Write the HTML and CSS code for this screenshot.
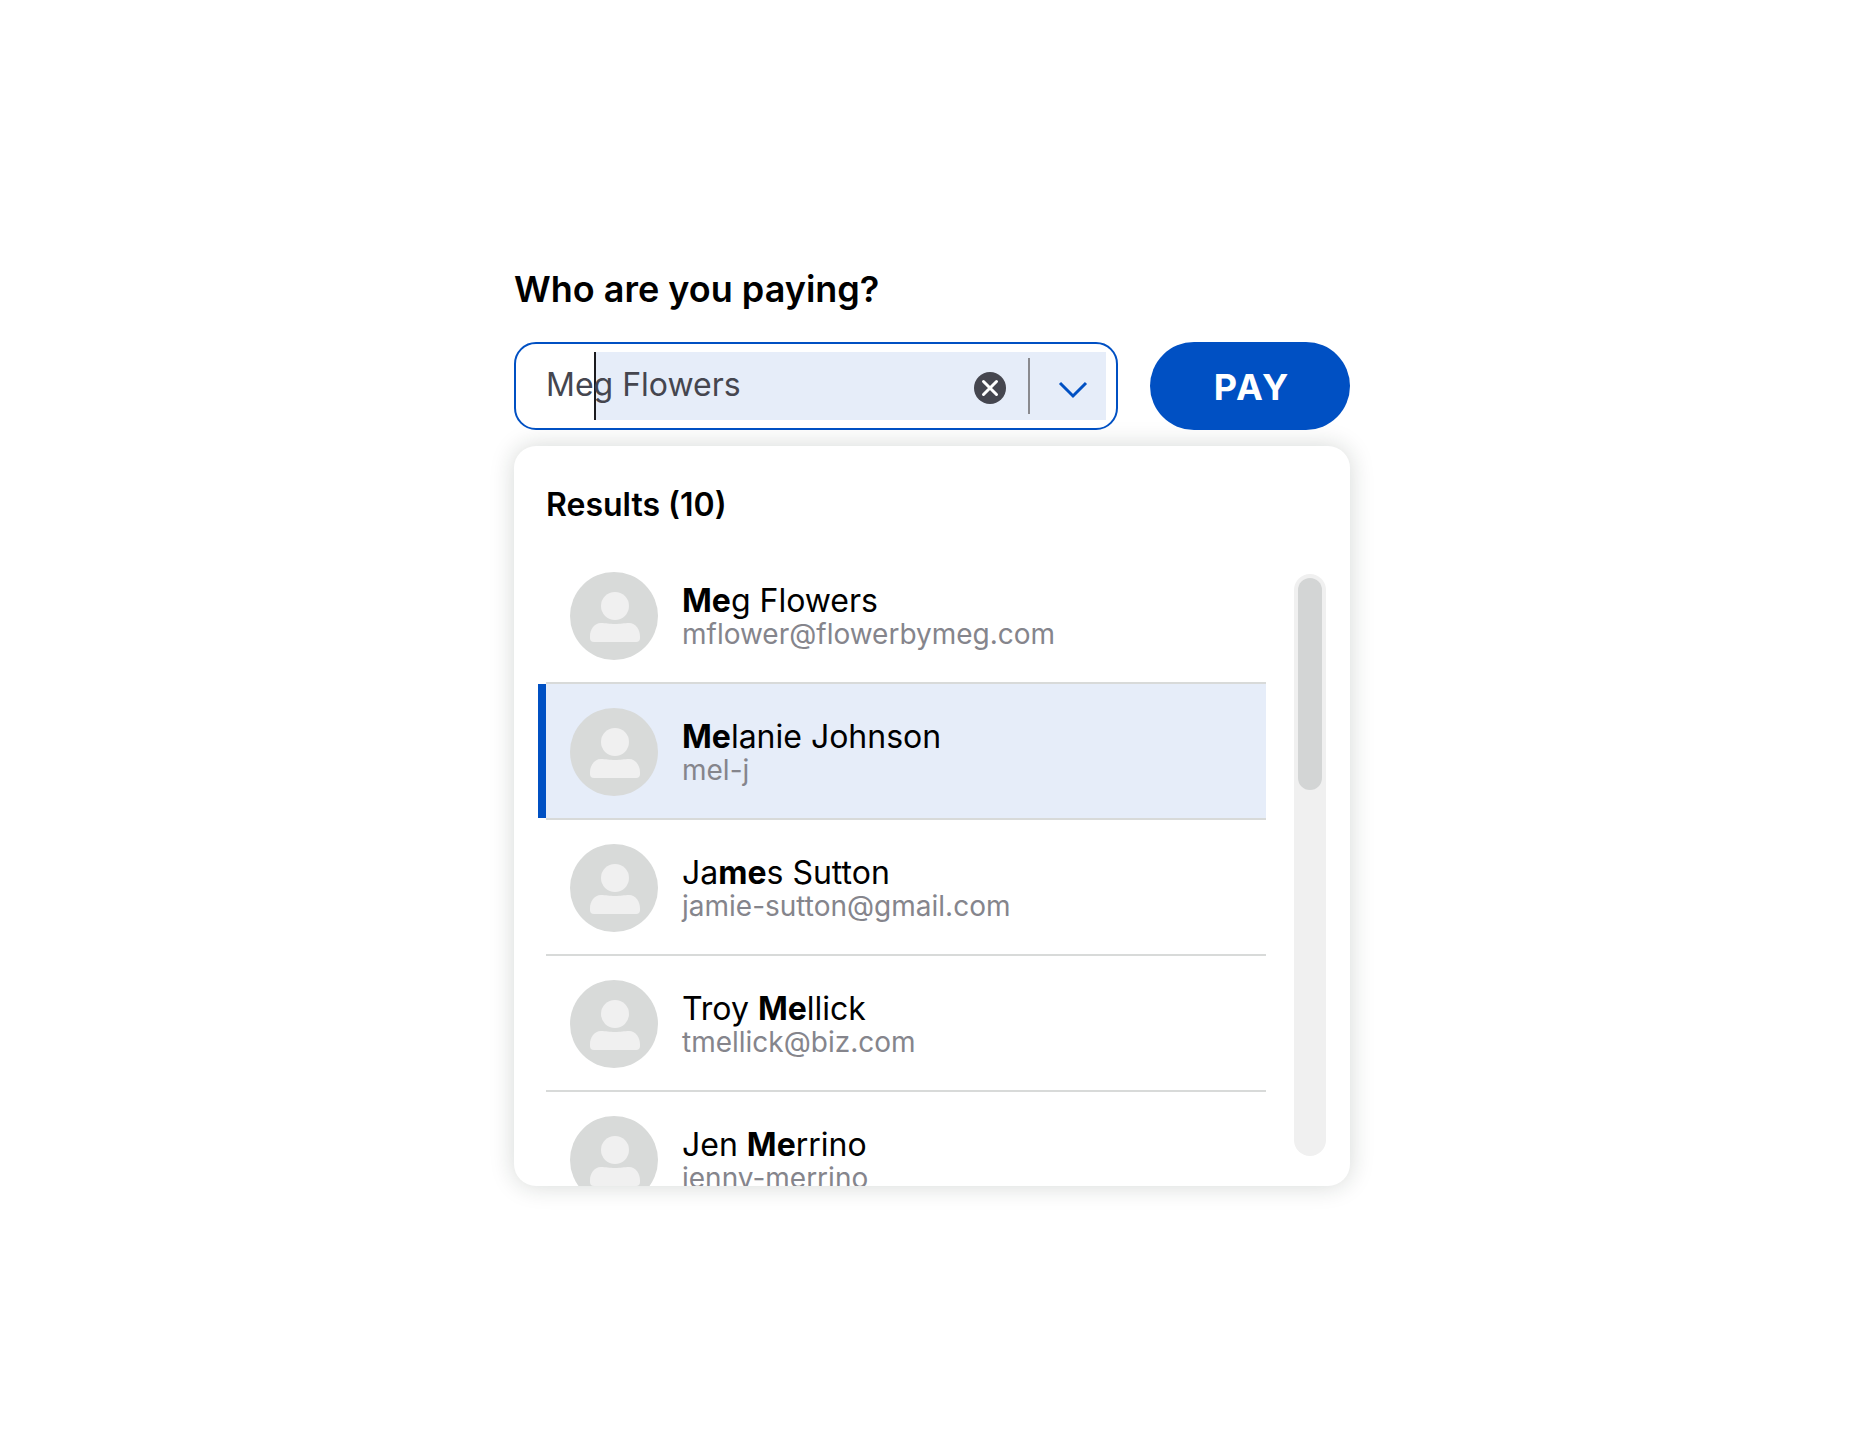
FILE: index.html
```html
<!DOCTYPE html>
<html lang="en">
<head>
<meta charset="utf-8">
<meta name="viewport" content="width=device-width, initial-scale=1">
<title>Pay someone</title>
<link rel="stylesheet" href="styles.css">
</head>
<body>
<svg class="sprite" aria-hidden="true">
  <symbol id="person" viewBox="0 0 88 88">
    <circle cx="44" cy="44" r="44" fill="#d8dad9"/>
    <circle cx="45" cy="34" r="14" fill="#f0f0f0"/>
    <path d="M31 51c5 0 8 1 14 1s9-1 14-1c7 0 11 7 11 13v2q0 4-4 4H24q-4 0-4-4v-2c0-6 4-13 11-13z" fill="#f0f0f0"/>
  </symbol>
</svg>
<main class="payee">
  <label class="title" for="payee-input">Who are you paying?</label>
  <form class="controls">
    <div class="field">
      <div class="combo">
        <input class="combo-input" id="payee-input" type="text" value="Meg Flowers" autocomplete="off" role="combobox" aria-expanded="true" aria-controls="results">
        <button class="clear" type="button" aria-label="Clear">
          <svg width="32" height="32" viewBox="0 0 32 32"><circle cx="16" cy="16" r="16" fill="#45464f"/><path d="M9.500 9.500l13 13M22.500 9.500l-13 13" stroke="#fff" stroke-width="3" stroke-linecap="round"/></svg>
        </button>
        <button class="toggle" type="button" aria-label="Show results">
          <svg width="78" height="68" viewBox="0 0 78 68"><path d="M32 31l13 13 13-13" fill="none" stroke="#0050c3" stroke-width="3"/></svg>
        </button>
      </div>
    </div>
    <button class="pay" type="button">PAY</button>
  </form>
  <section class="panel">
    <h2 class="panel-title">Results (10)</h2>
    <div class="viewport">
      <ul class="results" id="results" role="listbox" aria-label="Results">
        <li class="result" role="option">
          <svg class="avatar"><use href="#person"/></svg>
          <div class="who"><span class="name"><b>Me</b>g Flowers</span><span class="handle">mflower@flowerbymeg.com</span></div>
        </li>
        <li class="result selected" role="option" aria-selected="true">
          <svg class="avatar"><use href="#person"/></svg>
          <div class="who"><span class="name"><b>Me</b>lanie Johnson</span><span class="handle">mel-j</span></div>
        </li>
        <li class="result" role="option">
          <svg class="avatar"><use href="#person"/></svg>
          <div class="who"><span class="name">Ja<b>me</b>s Sutton</span><span class="handle">jamie-sutton@gmail.com</span></div>
        </li>
        <li class="result" role="option">
          <svg class="avatar"><use href="#person"/></svg>
          <div class="who"><span class="name">Troy <b>Me</b>llick</span><span class="handle">tmellick@biz.com</span></div>
        </li>
        <li class="result" role="option">
          <svg class="avatar"><use href="#person"/></svg>
          <div class="who"><span class="name">Jen <b>Me</b>rrino</span><span class="handle">jenny-merrino</span></div>
        </li>
      </ul>
      <div class="track" aria-hidden="true"><div class="thumb"></div></div>
    </div>
  </section>
</main>
</body>
</html>
```

FILE: styles.css
```css
*, *::before { box-sizing: border-box; }

body {
  margin: 0;
  background: #fff;
  color: #000;
  font-family: Inter, "Liberation Sans", sans-serif;
}

button {
  border: 0;
  padding: 0;
  background: none;
  font: inherit;
  cursor: pointer;
}

svg { display: block; }

.sprite {
  position: absolute;
  width: 0;
  height: 0;
}

.payee {
  max-width: 840px;
  margin: 0 auto;
  padding: 267px 0 64px 4px;
}

.title {
  display: block;
  margin-bottom: 31px;
  font-size: 36px;
  font-weight: 600;
  line-height: 44px;
}

.controls {
  display: flex;
  gap: 32px;
  margin-bottom: 16px;
}

.field {
  flex: 1;
  min-width: 0;
  padding: 8px 10px 8px 30px;
  border: 2px solid #0050c3;
  border-radius: 22px;
  background: #fff;
}

/* Typed letters stay on white; the caret and the suggested rest are tinted. */
.combo {
  display: flex;
  align-items: center;
  height: 68px;
  background: linear-gradient(90deg, transparent 48px, #1b1b1f 48px 50px, #e6edf9 50px);
}

.combo-input {
  flex: 1;
  min-width: 0;
  height: 68px;
  padding: 0 0 4px;
  border: 0;
  outline: 0;
  background: transparent;
  color: #45464f;
  font: 400 32px Inter, "Liberation Sans", sans-serif;
}

.clear { margin: 4px 22px 0 0; }

.toggle {
  background: linear-gradient(#8a8a8f, #8a8a8f) left center / 2px 56px no-repeat;
}

.pay {
  width: 200px;
  padding: 2px 0 0 4px;
  border-radius: 44px;
  background: #0050c3;
  color: #fff;
  font-size: 36px;
  font-weight: 700;
  letter-spacing: 2px;
}

.panel {
  overflow: hidden;
  padding: 39px 24px 0 32px;
  border-radius: 22px;
  background: #fff;
  box-shadow: 0 0 24px rgba(20, 40, 30, 0.18);
}

.panel-title {
  margin: 0 0 23px;
  font-size: 32px;
  font-weight: 600;
  line-height: 40px;
}

.viewport {
  display: flex;
  gap: 28px;
  max-height: 638px;
}

.results {
  flex: 1;
  margin: 0;
  padding: 0;
  list-style: none;
}

.result {
  position: relative;
  display: flex;
  gap: 24px;
  padding: 24px 24px 22px;
  border-bottom: 2px solid #d8dad9;
}

.selected { background: #e6edf9; }

.selected::before {
  content: "";
  position: absolute;
  inset: 0 auto 0 -8px;
  width: 8px;
  background: #0050c3;
}

.avatar {
  flex: none;
  width: 88px;
  height: 88px;
}

.who {
  display: flex;
  flex-direction: column;
  justify-content: center;
  padding-top: 2px;
}

.name {
  font-size: 32px;
  line-height: 34px;
}

.name b { font-weight: 700; }

.handle {
  color: #85858c;
  font-size: 28px;
  line-height: 32px;
}

.track {
  width: 32px;
  margin: 26px 0 30px;
  padding: 4px;
  border-radius: 16px;
  background: #f0f0f0;
}

.thumb {
  height: 212px;
  border-radius: 12px;
  background: #d3d5d5;
}
```
